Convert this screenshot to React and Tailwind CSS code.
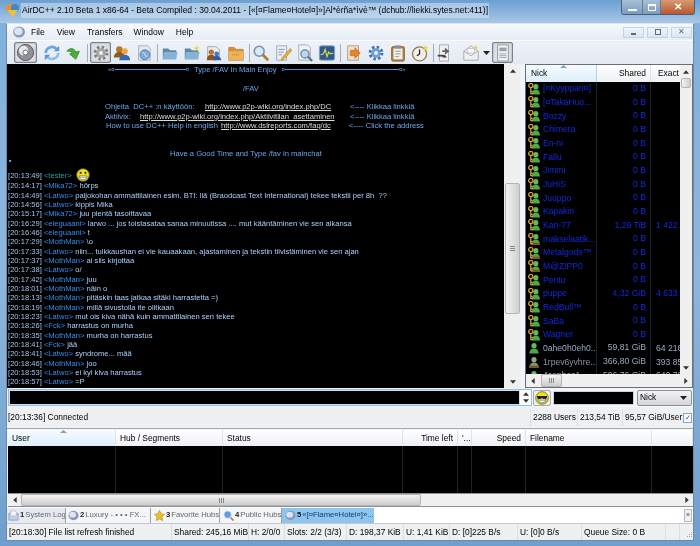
import React from "react";

const S = ({ children, size = 18, className = "" }) => (
  <svg width={size} height={size} viewBox="0 0 20 20" className={className}>{children}</svg>
);
const Disc = () => <S size={19}><circle cx="10" cy="10" r="8.5" fill="#8d9296" stroke="#55595c"/><circle cx="8" cy="8" r="5" fill="#e6e8ea"/><circle cx="10" cy="10" r="2.6" fill="#fff" stroke="#666"/></S>;
const Refresh = () => <S><path d="M3 10a7 7 0 0 1 12-4.5" fill="none" stroke="#6ba6de" strokeWidth="3"/><path d="M17 10a7 7 0 0 1-12 4.5" fill="none" stroke="#8cc0ea" strokeWidth="3"/><path d="M18 2v6h-6z" fill="#5a97d6"/><path d="M2 18v-6h6z" fill="#5a97d6"/></S>;
const GreenArrow = () => <S><path d="M2 8c3-4 8-4 10 1l4-1-4 9-7-6 3-1c-1-2-4-2-6-2z" fill="#4caf3a" stroke="#2c7d22" strokeWidth=".8"/></S>;
const Gear = ({ c = "#a4a4a4", d = "#7f7f7f" }) => <S><circle cx="10" cy="10" r="6.500" fill="none" stroke={d} strokeWidth="3.400" strokeDasharray="2.600 2.500"/><circle cx="10" cy="10" r="5.400" fill={c}/><circle cx="10" cy="10" r="2.200" fill="#eef0f2"/></S>;
const Users = () => <S><circle cx="7" cy="6" r="3.600" fill="#b5762a"/><path d="M1 15c0-4 3-6 6-6s6 2 6 6z" fill="#8a5a1f"/><circle cx="13" cy="8" r="3.400" fill="#f2a33a"/><path d="M7 18c0-4 3-6 6-6s6 2 6 6z" fill="#3566b4"/></S>;
const GlobeDoc = () => <S><path d="M4 2h10l3 3v13H4z" fill="#e6e8ec" stroke="#a8adb4"/><circle cx="11" cy="12" r="5.500" fill="#7fa9d8" stroke="#4f7fb4"/><path d="M8 10c2-1 3 0 3 2s2 2 3 1" fill="none" stroke="#dfeaf6"/></S>;
const Folder = ({ a = "#5f87a8", b = "#86b2d6", star }) => <S><path d="M2 5h6l2 2h7v10H2z" fill={a}/><path d="M3.500 9h15l-2 8H2z" fill={b}/>{star && <path d="M15 1l1 2.500 2.500.500-2 1.500.5 2.500-2-1.300-2 1.300.5-2.500-2-1.500 2.500-.5z" fill="#f5d64c"/>}</S>;
const FolderUsers = () => <S><path d="M3 3h9l4 3v11H3z" fill="#eceef1" stroke="#98a0a8"/><circle cx="7" cy="9" r="3" fill="#c0702a"/><path d="M2 18c0-4 2-6 5-6s5 2 5 6z" fill="#8a5420"/><circle cx="13" cy="11" r="2.600" fill="#3f78c8"/><path d="M9 18c0-3 2-5 4-5s5 2 5 5z" fill="#2d5ca8"/></S>;
const OrangeFolder = () => <S><path d="M2 4h6l2 2h8v12H2z" fill="#d9912f" stroke="#a86a1a" strokeWidth=".7"/><path d="M2 8h16v10H2z" fill="#efb257"/><path d="M6 12h8" stroke="#a86a1a" strokeDasharray="1 1"/></S>;
const Magnifier = () => <S><circle cx="8" cy="8" r="5.500" fill="#d9e8f6" stroke="#7a93ad" strokeWidth="1.800"/><path d="M12 12l6 6" stroke="#a97a3c" strokeWidth="3"/></S>;
const NotePencil = () => <S><path d="M3 2h11v16H3z" fill="#eef0f3" stroke="#9aa3ad"/><path d="M5 6h7M5 9h6M5 12h4" stroke="#6d8fb8"/><path d="M18 5L9 15l-1 3 3-1 9-10z" fill="#e7b33c" stroke="#9c7420" strokeWidth=".6"/></S>;
const DocMag = () => <S><path d="M3 1h10l3 3v14H3z" fill="#eef0f3" stroke="#a4acb5"/><circle cx="10" cy="11" r="4.500" fill="#bcd4ec" stroke="#6f88a4" strokeWidth="1.500"/><path d="M13 14l5 5" stroke="#5f6f80" strokeWidth="2.400"/></S>;
const Chart = () => <S><rect x="1.500" y="2" width="17" height="16" rx="2" fill="#2d5a8c" stroke="#8ea6bf"/><path d="M3 12l3-1 2-5 2 8 2-5 2 2 3-1" fill="none" stroke="#e6d54c" strokeWidth="1.300"/></S>;
const ArrowBox = () => <S><path d="M3 2h12v16H3z" fill="#f0e4c8" stroke="#a79a80"/><path d="M6 7h5V4l6 6-6 6v-3H6z" fill="#e8832a" stroke="#b05a14" strokeWidth=".6"/></S>;
const Clipboard = () => <S><rect x="3" y="3" width="14" height="16" rx="1.500" fill="#b98540" stroke="#7f5520"/><rect x="5" y="5" width="10" height="12" fill="#f2f2f0"/><rect x="7" y="1.500" width="6" height="3.500" fill="#8b9098"/><path d="M7 8h6M7 11h6M7 14h4" stroke="#8a8a8a"/></S>;
const Clock = () => <S><circle cx="9.500" cy="11" r="7.800" fill="#f4efe6" stroke="#8d7a5c" strokeWidth="1.400"/><path d="M9.500 6v5l-3 2" fill="none" stroke="#222" strokeWidth="1.400"/><path d="M16 1l1 2.400 2.400.5-2 1.500.5 2.500-2-1.300-1.800 1.300.4-2.500-1.800-1.500 2.400-.5z" fill="#f0d048"/></S>;
const DocArrow = () => <S><path d="M5 1h10v18H5z" fill="#f0f1f3" stroke="#a0a6ad"/><path d="M8 7h3V4l5 4-5 4V9H8z" fill="#666"/><path d="M3 12h7v2H3z" fill="#444"/><path d="M11 12l-3 3h5z" fill="#333"/></S>;
const Envelope = () => <S><path d="M2 8l8-6 8 6v10H2z" fill="#eef0f2" stroke="#a2a8ae"/><path d="M2 8l8 5 8-5" fill="none" stroke="#a2a8ae"/><rect x="6" y="5" width="8" height="5" fill="#fafafa" stroke="#c2c6ca"/><path d="M15 1l.800 2 2 .400-1.600 1.200.4 2-1.600-1-1.600 1 .4-2-1.600-1.200 2-.4z" fill="#f0d048"/></S>;
const DocPanel = () => <S><path d="M4 1h12v18H4z" fill="#f0f1f3" stroke="#8e949a"/><rect x="6" y="4" width="8" height="4" fill="#9ba1a8"/><path d="M6 11h8M6 13h8M6 15h8" stroke="#9ba1a8"/></S>;
const Bubble = () => <S size={14}><ellipse cx="10" cy="10" rx="8.500" ry="8" fill="#8a9ab5"/><ellipse cx="9" cy="9" rx="6" ry="5.500" fill="#dbe4f2"/></S>;

const Smiley = ({ glasses }) => (
  <svg width="14" height="14" viewBox="0 0 14 14">
    <circle cx="7" cy="7" r="6.300" fill="#efe21c" stroke="#6f6a10" strokeWidth=".8"/>
    {glasses ? <path d="M2 5h10v1.500l-1 1.500H8.200L7 6.500 5.800 8H3L2 6.500z" fill="#222"/> : <><circle cx="4.600" cy="4.800" r="1.100" fill="#333"/><circle cx="9.400" cy="4.800" r="1.100" fill="#333"/></>}
    <path d="M3 8h8c0 2.500-2 3.800-4 3.800S3 10.500 3 8z" fill="#fff" stroke="#444" strokeWidth=".6"/>
    <path d="M3.500 9.500h7" stroke="#777" strokeWidth=".5"/>
  </svg>
);

const UserIcon = ({ op, base }) => (
  <svg width="12" height="12" viewBox="0 0 13 13" className="shrink-0">
    <circle cx={op ? 8.500 : 6.500} cy="4" r="2.800" fill={base === "grey" ? "#8fa88c" : "#62b85e"}/>
    <path d={op ? "M4 12.500c0-3.500 2-5.500 4.500-5.500s4.500 2 4.500 5.500z" : "M1.500 12.500c0-3.500 2-5.500 5-5.500s5 2 5 5.500z"} fill={base === "grey" ? "#7d957a" : "#4da84a"}/>
    {base && <rect x={op ? 3 : 1} y="10.500" width={op ? 10 : 11} height="2.500" fill="#7a5526"/>}
    {op && <><circle cx="3" cy="2.800" r="2.300" fill="none" stroke="#d9a520" strokeWidth="1.400"/><path d="M3 5v7M3 9h2M3 11.500h2" stroke="#d9a520" strokeWidth="1.300"/></>}
  </svg>
);

const Arrow = ({ dir }) => {
  const d = { up: "M0 4L3.500 0 7 4z", down: "M0 0L3.500 4 7 0z", left: "M4 0L0 3.500 4 7z", right: "M0 0L4 3.500 0 7z" }[dir];
  return <svg width="6" height="6" viewBox="0 0 7 7" className="shrink-0"><path d={d} fill="#333" transform={dir === "up" || dir === "down" ? "translate(0 1.500)" : "translate(1.500 0)"}/></svg>;
};

const TBtn = ({ children, pressed, w = "w-[22px]", className = "" }) => (
  <div className={`${w} ${className} h-[21px] flex items-center justify-center shrink-0 ${pressed ? "border border-[#7d8287] rounded-[2px] bg-[#dde1e6] shadow-[inset_0_0_2px_#8a8f94]" : ""}`}>{children}</div>
);
const Sep = () => <div className="w-px h-[18px] bg-[#a9adb2] mx-[2px] shrink-0" />;

const Ctrl = ({ children, w = "w-[21px]" }) => (
  <div className={`${w} h-[11px] flex items-center justify-center bg-gradient-to-b from-[#eef5fc] to-[#d8e6f4] border border-[#c2d3e4] text-[#5a6a7a] text-[8px] leading-none`}>{children}</div>
);

const chat = [
  ["20:13:49", "tester", "", true],
  ["20:14:17", "Mika72", "hörps"],
  ["20:14:49", "Latwo", "paljokohan ammattilainen esim. BTI: llä (Braodcast Text International) tekee tekstii per 8h  ??"],
  ["20:14:56", "Latwo", "kippis Mika"],
  ["20:15:17", "Mika72", "juu pientä tasoittavaa"],
  ["20:16:29", "eleguaani", "larwo ... jos toistasataa sanaa minuutissa .... mut kääntäminen vie sen aikansa"],
  ["20:16:46", "eleguaani", "t"],
  ["20:17:29", "MothMan", "\\o"],
  ["20:17:33", "Latwo", "niin... tulkkaushan ei vie kauaakaan, ajastaminen ja tekstin tiivistäminen vie sen ajan"],
  ["20:17:37", "MothMan", "ai siis kirjottaa"],
  ["20:17:38", "Latwo", "o/"],
  ["20:17:42", "MothMan", "juu"],
  ["20:18:01", "MothMan", "näin o"],
  ["20:18:13", "MothMan", "pitäskin taas jatkaa sitäki harrastetta =)"],
  ["20:18:19", "MothMan", "millä sivustolla ite olitkaan"],
  ["20:18:23", "Latwo", "mut ois kiva nähä kuin ammattilainen sen tekee"],
  ["20:18:26", "Fck", "harrastus on murha"],
  ["20:18:35", "MothMan", "murha on harrastus"],
  ["20:18:41", "Fck", "jää"],
  ["20:18:41", "Latwo", "syndrome... mää"],
  ["20:18:46", "MothMan", "joo"],
  ["20:18:53", "Latwo", "ei kyl kiva harrastus"],
  ["20:18:57", "Latwo", "=P"],
];

const users = [
  ["[¤Kyyppari¤]", "0 B", "", 1], ["[¤TakaHuo...", "0 B", "", 1], ["Bozzy", "0 B", "", 1], ["Chimera", "0 B", "", 1],
  ["En-ni", "0 B", "", 1], ["Fallu", "0 B", "", 1], ["Jimmi", "0 B", "", 1], ["JuHiS", "0 B", "", 1],
  ["Juoppo", "0 B", "", 1], ["Kapakin", "0 B", "", 1], ["Kari-77", "1,29 TiB", "1 422 8", 1],
  ["makselaatik...", "0 B", "", 1, 1], ["Metalgods™", "0 B", "", 1, 1], ["M@Z!PP0", "0 B", "", 1, 1],
  ["Pentu", "0 B", "", 1], ["puppe", "4,32 GiB", "4 633 4", 1], ["RedBull™", "0 B", "", 1], ["SaBa", "0 B", "", 1], ["Wagner", "0 B", "", 1],
  ["0ahe0h0eh0...", "59,81 GiB", "64 216", 0], ["1rpev6yvhre...", "366,80 GiB", "393 85", 0, 2], ["4cephas1", "596,76 GiB", "640 76", 0],
];

const cols = [
  ["User", "w-[108px]"], ["Hub / Segments", "w-[107px]"], ["Status", "w-[180px]"], ["Time left", "w-[55px]", true],
  ["'...", "w-[14px]"], ["Speed", "w-[54px]", true], ["Filename", "w-[126px]"], ["", "flex-1"],
];
const tabs = [
  ["1", "System Log", "w-[59px] pl-[1px] bg-[#e6eaf0]"], ["2", "Luxury - • • • FX...", "w-[85px] pl-[2px] bg-[#f4f5f7]"], ["3", "Favorite Hubs", "w-[69px] pl-[3px] bg-[#f4f5f7]"], ["4", "Public Hubs", "w-[62px] pl-[3px] bg-[#f4f5f7]"],
];
const statusCells = [
  ["[20:18:30] File list refresh finished", "w-[165px]"], ["Shared: 245,16 MiB", "w-[77px]"], ["H: 2/0/0", "w-[36px]"], ["Slots: 2/2 (3/3)", "w-[62px]"],
  ["D: 198,37 KiB", "w-[57px]"], ["U: 1,41 KiB", "w-[46px]"], ["D: [0]225 B/s", "w-[68px]"], ["U: [0]0 B/s", "w-[64px]"], ["Queue Size: 0 B", "w-[84px]"], ["", "w-[14px]"],
];

const VScroll = ({ thumbTop, thumbH, w = "w-[17px]", grip }) => (
  <div className={`${w} shrink-0 bg-[#f0f0f0] flex flex-col items-center`}>
    <div className="h-[13px] flex items-center justify-center shrink-0"><Arrow dir="up" /></div>
    <div className="flex-1 w-full flex flex-col">
      <div className={`${thumbTop} shrink-0`} />
      <div className={`${thumbH} mx-px bg-gradient-to-r from-[#f2f2f2] to-[#cfcfcf] border border-[#b5b5b5] rounded-[2px] flex items-center justify-center shrink-0`}>
        {grip && <div className="w-[5px] h-[5px] border-y border-[#888] [background:linear-gradient(#888,#888)_center/100%_1px_no-repeat]" />}
      </div>
    </div>
    <div className="h-[13px] flex items-center justify-center shrink-0"><Arrow dir="down" /></div>
  </div>
);

const HScroll = ({ from, thumb, h = "h-[13px]" }) => (
  <div className={`${h} shrink-0 bg-[#f0f0f0] flex items-center`}>
    <div className="w-[13px] flex justify-center shrink-0"><Arrow dir="left" /></div>
    <div className={`${from} shrink-0`} />
    <div className={`${thumb} h-full bg-gradient-to-b from-[#f4f4f4] to-[#cdcdcd] border border-[#b5b5b5] rounded-[2px] flex items-center justify-center`}>
      <div className="w-[5px] h-[5px] border-x border-[#888] [background:linear-gradient(#888,#888)_center/1px_100%_no-repeat]" />
    </div>
    <div className="flex-1" />
    <div className="w-[13px] flex justify-center shrink-0"><Arrow dir="right" /></div>
  </div>
);

const Ln = ({ children }) => <div className="h-[9.33px] leading-[9.33px] flex whitespace-pre">{children}</div>;
const Link = ({ children, w }) => <span className={`${w} text-[#dcdcdc] underline underline-offset-1 shrink-0`}>{children}</span>;

export default function App() {
  return (
    <div className="w-[700px] h-[546px] overflow-hidden flex flex-col bg-gradient-to-b from-[#7fb0dc] via-[#8db7dc] to-[#6f9fce] font-['Liberation_Sans',sans-serif] text-black blur-[0.2px]">
      {/* title bar */}
      <div className="h-[23px] shrink-0 flex items-start pl-[5px] bg-gradient-to-b from-[#6c9fd2] to-[#a9c7e6] relative">
        <svg width="15" height="15" viewBox="0 0 15 15" className="mt-[3px] shrink-0"><circle cx="5" cy="5" r="4" fill="#e8912a"/><circle cx="10" cy="5" r="4" fill="#3f86cf"/><path d="M2 7l5.500 7L13 7z" fill="#e8c23a"/></svg>
        <div className="ml-[1px] mt-[3px] px-[1px] h-[15px] leading-[15px] text-[8.500px] whitespace-nowrap bg-[#dce9f5]/50 text-black">AirDC++ 2.10 Beta 1 x86-64 - Beta Compiled : 30.04.2011 - [«[¤Flame¤Hotel¤]»]Al*èrña*ìvè™ (dchub://liekki.sytes.net:411)]</div>
        <div className="ml-auto mr-[5px] flex h-[15px] border border-[#4a5f78] border-t-0 rounded-b-[3px] overflow-hidden shrink-0">
          <div className="w-[20px] bg-gradient-to-b from-[#a8c0d8] to-[#7a9cbc] flex items-end justify-center pb-[3px]"><div className="w-[9px] h-[2px] bg-white" /></div>
          <div className="w-[19px] bg-gradient-to-b from-[#a8c0d8] to-[#7a9cbc] border-x border-[#5f7c98] flex items-center justify-center"><div className="w-[8px] h-[7px] border border-white border-t-2" /></div>
          <div className="w-[33px] bg-gradient-to-b from-[#d69a72] to-[#b8582e] flex items-center justify-center text-white font-bold text-[10px] leading-none">✕</div>
        </div>
      </div>

      {/* client */}
      <div className="mx-[6px] h-[518px] shrink-0 flex flex-col bg-[#f1f4f9] border border-[#6f8aa8] border-t-[#dbe6f1]">
        {/* menu */}
        <div className="h-[16px] shrink-0 flex items-center bg-gradient-to-b from-[#f7f9fc] to-[#e6ecf5] text-[8.500px] relative">
          <div className="ml-[3px] w-[18px] flex justify-center"><Bubble /></div>
          <span className="ml-[3px]">File</span>
          <span className="ml-[12px]">View</span>
          <span className="ml-[12px]">Transfers</span>
          <span className="ml-[11px]">Window</span>
          <span className="ml-[12px]">Help</span>
          <div className="ml-auto mr-px flex gap-[3px]">
            <Ctrl><div className="w-[5px] h-[2px] bg-[#5a6a7a] mt-[4px]" /></Ctrl>
            <Ctrl><div className="w-[6px] h-[6px] border border-[#5a6a7a]" /></Ctrl>
            <Ctrl>✕</Ctrl>
          </div>
        </div>
        {/* toolbar */}
        <div className="h-[24px] shrink-0 flex items-center pl-[7px] bg-gradient-to-b from-[#eef2f8] to-[#e4eaf2] border-t border-[#f9fbfd]">
          <TBtn pressed w="w-[23px]"><Disc /></TBtn>
          <div className="w-[4px]" />
          <TBtn><Refresh /></TBtn><TBtn><GreenArrow /></TBtn>
          <Sep />
          <TBtn pressed w="w-[21px]"><Gear /></TBtn>
          <TBtn><Users /></TBtn><TBtn><GlobeDoc /></TBtn>
          <Sep />
          <TBtn className="-ml-px"><Folder /></TBtn><TBtn><Folder star /></TBtn><TBtn><FolderUsers /></TBtn><TBtn><OrangeFolder /></TBtn>
          <Sep />
          <TBtn className="-ml-[2px]"><Magnifier /></TBtn><TBtn><NotePencil /></TBtn><TBtn><DocMag /></TBtn><TBtn><Chart /></TBtn>
          <Sep />
          <TBtn><ArrowBox /></TBtn><TBtn><Gear c="#6f9fd8" d="#3f6fa8" /></TBtn><TBtn><Clipboard /></TBtn><TBtn><Clock /></TBtn>
          <Sep />
          <TBtn className="-ml-[3px]"><DocArrow /></TBtn>
          <div className="w-[5px]" />
          <TBtn><Envelope /></TBtn>
          <svg width="7" height="4" viewBox="0 0 7 4" className="ml-[1px]"><path d="M0 0h7L3.500 4z" fill="#222"/></svg>
          <div className="w-[2px]" />
          <TBtn pressed w="w-[21px]"><DocPanel /></TBtn>
        </div>

        {/* hub area */}
        <div className="h-[324px] shrink-0 flex">
          <div className="w-[497px] shrink-0 bg-black text-[7.600px] overflow-hidden pt-[1px] pl-px text-[#6ea6ec]">
            <Ln><span className="ml-[100px] w-[81px] text-[#6ea6ec] flex items-center text-[6px]">«¤<span className="flex-1 border-t border-[#5a90d8]" />¤</span><span className="ml-[5px]">Type /FAV In Main Enjoy</span><span className="ml-[5px] w-[124px] text-[#6ea6ec] flex items-center text-[6px]">¤<span className="flex-1 border-t border-[#5a90d8]" />¤»</span></Ln>
            <Ln> </Ln>
            <Ln><span className="ml-[235px]">/FAV</span></Ln>
            <Ln> </Ln>
            <Ln><span className="ml-[97px] w-[100px]">Ohjeita  DC++ :n käyttöön:</span><Link w="w-[145px]">http://www.p2p-wiki.org/index.php/DC</Link><span>{"<---- Klikkaa linkkiä"}</span></Ln>
            <Ln><span className="ml-[97px] w-[35px]">Aktiivix:</span><Link w="w-[210px]">http://www.p2p-wiki.org/index.php/Aktiivitilan_asettaminen</Link><span>{"<---- Klikkaa linkkiä"}</span></Ln>
            <Ln><span className="ml-[98px] w-[115px]">How to use DC++ Help in english</span><Link w="w-[128px]">http://www.dslreports.com/faq/dc</Link><span>{"<---- Click the address"}</span></Ln>
            <Ln> </Ln>
            <Ln> </Ln>
            <Ln><span className="ml-[162px]">Have a Good Time and Type /fav in mainchat</span></Ln>
            <div className="h-[7px] pl-[1px] leading-[5px] text-[#8ab4e8]">▪</div>
            <div className="mt-[4px]">
              {chat.map(([t, n, m, smile], i) => (
                <div key={i} className={`flex whitespace-pre leading-[9.33px] ${smile ? "h-[12px] items-center" : "h-[9.33px]"}`}>
                  <span className="text-[#a4c2e8]">[{t}] </span>
                  <span className={smile ? "text-[#22a0a0]" : "text-[#3a8cec]"}>{"<"}{n}{">"} </span>
                  <span className="text-[#acd0fa]">{m}</span>
                  {smile && <span className="ml-[2px]"><Smiley /></span>}
                </div>
              ))}
            </div>
          </div>
          <VScroll thumbTop="h-[106px]" thumbH="h-[131px]" grip />
          <div className="w-[4px] shrink-0" />
          <div className="flex-1 min-w-0 border border-[#6a6f75] flex flex-col">
            <div className="flex flex-1 min-h-0">
              <div className="flex-1 min-w-0 flex flex-col">
                <div className="h-[17px] shrink-0 flex bg-gradient-to-b from-white to-[#eef0f3] text-[8.400px]">
                  <div className="w-[71px] shrink-0 pl-[5px] flex items-center border-r border-[#a5d7f3] bg-gradient-to-b from-[#f6fbfe] to-[#dceffb] relative">
                    Nick
                    <svg className="absolute left-[34px] top-0" width="7" height="3" viewBox="0 0 7 3"><path d="M0 3L3.500 0 7 3z" fill="#7da3c4"/></svg>
                  </div>
                  <div className="w-[54px] shrink-0 pr-[4px] flex items-center justify-end border-r border-[#dfe2e6]">Shared</div>
                  <div className="flex-1 overflow-hidden whitespace-nowrap pl-[7px] flex items-center">Exact S</div>
                </div>
                <div className="flex-1 min-h-0 bg-black overflow-hidden text-[8.600px]">
                  {users.map(([n, s, e, op, b], i) => (
                    <div key={i} className={`h-[13.67px] flex items-center ${op ? "text-[#1428dc]" : "text-[#9aaac4]"}`}>
                      <div className="w-[71px] shrink-0 flex items-center gap-[3px] pl-[2px] border-r border-[#1a2430] h-full overflow-hidden whitespace-nowrap">
                        <UserIcon op={op} base={b === 1 ? "brown" : b === 2 ? "grey" : undefined} />
                        <span className={i === 20 ? "text-[#8a94a2]" : ""}>{n}</span>
                      </div>
                      <div className="w-[54px] shrink-0 pr-[4px] text-right border-r border-[#1a2430] h-full leading-[13.67px]">{s}</div>
                      <div className="flex-1 overflow-hidden whitespace-nowrap pl-[5px]">{e}</div>
                    </div>
                  ))}
                </div>
              </div>
              <VScroll w="w-[12px]" thumbTop="h-0" thumbH="h-[10px]" />
            </div>
            <HScroll from="w-[2px]" thumb="w-[21px]" />
          </div>
        </div>

        {/* input row */}
        <div className="h-[19px] shrink-0 flex items-center pl-px pr-px">
          <div className="w-[524px] h-[17px] border border-[#8fc0e8] flex items-center bg-white shrink-0">
            <div className="flex-1 h-full bg-black border border-[#d9dde2]" />
            <div className="w-[11px] flex flex-col items-center justify-center gap-[1px]"><Arrow dir="up" /><Arrow dir="down" /></div>
          </div>
          <div className="w-[18px] h-[16px] border border-[#a8acb2] rounded-[2px] flex items-center justify-center ml-[1px] bg-[#eceef1] shrink-0"><Smiley glasses /></div>
          <div className="w-[81px] h-[14px] bg-black border border-[#d0d4d8] ml-[2px] shrink-0" />
          <div className="flex-1 h-[16px] ml-[3px] border border-[#8d9196] rounded-[2px] bg-gradient-to-b from-[#f4f4f4] to-[#d6d6d6] flex items-center pl-[2px] pr-[4px] text-[8.400px]">
            Nick
            <svg width="7" height="4" viewBox="0 0 7 4" className="ml-auto"><path d="M0 0h7L3.500 4z" fill="#222"/></svg>
          </div>
        </div>

        {/* connected row */}
        <div className="h-[22px] shrink-0 flex items-center bg-[#eff0f2] text-[8.400px] border-b border-[#a4a8ad] whitespace-nowrap">
          <div className="flex-1 pl-px">[20:13:36] Connected</div>
          <div className="w-[47px] pl-[2px] border-l border-[#dcdee1] leading-[17px]">2288 Users</div>
          <div className="w-[45px] pl-[2px] border-l border-[#dcdee1] leading-[17px]">213,54 TiB</div>
          <div className="w-[61px] pl-[2px] border-l border-[#dcdee1] leading-[17px]">95,57 GiB/User</div>
          <div className="w-[9px] h-[10px] border border-[#8ea5bb] bg-[#f6f9fc] text-[#2e5a9c] text-[7px] leading-[8px] text-center mr-px">✓</div>
        </div>

        {/* transfers */}
        <div className="h-[16px] mt-[1px] shrink-0 flex bg-gradient-to-b from-white to-[#eef0f3] text-[8.400px] ml-px">
          {cols.map(([c, w, r], i) => (
            <div key={i} className={`${w} h-full flex items-center border-r border-[#dfe2e6] whitespace-nowrap ${r ? "justify-end pr-[4px]" : "pl-[4px]"} ${i === 0 ? "bg-gradient-to-b from-[#f6fbfe] to-[#dceffb] border-[#a5d7f3] relative" : ""}`}>
              {c}
              {i === 0 && <svg className="absolute left-[52px] top-0" width="7" height="3" viewBox="0 0 7 3"><path d="M0 3L3.500 0 7 3z" fill="#7da3c4"/></svg>}
            </div>
          ))}
        </div>
        <div className="flex-1 min-h-0 flex bg-black ml-px">
          {cols.map(([c, w], i) => <div key={i} className={`${w} h-full border-r border-[#1a2430] last:border-0`} />)}
        </div>
        <div className="ml-px border-y border-[#8b9096]"><HScroll from="w-[0px]" thumb="w-[400px]" h="h-[12px]" /></div>

        {/* tabs */}
        <div className="h-[16px] shrink-0 flex items-center bg-white text-[7.700px]">
          {tabs.map(([k, t, w], i) => (
            <div key={i} className={`${w} h-[15px] flex items-center gap-[1px] whitespace-nowrap overflow-hidden shrink-0 border-r border-[#9da2a8] text-[#5f6772]`}>
              {i === 0 && <svg width="11" height="11" viewBox="0 0 13 13" className="shrink-0"><path d="M1 4h11v8H1z" fill="#c0d0e6" stroke="#8ea0bc"/><path d="M3 1h5l2 2v4H3z" fill="#f2f4f8" stroke="#a0a8b4" strokeWidth=".6"/></svg>}
              {i === 1 && <svg width="11" height="11" viewBox="0 0 13 13" className="shrink-0"><ellipse cx="6.500" cy="6.500" rx="6" ry="5.500" fill="#8a9ab5"/><ellipse cx="5.500" cy="5.500" rx="4" ry="3.500" fill="#dbe4f2"/></svg>}
              {i === 2 && <svg width="11" height="11" viewBox="0 0 13 13" className="shrink-0"><path d="M6.500 .5l2 4 4 .6-3 3 .8 4.400-3.800-2-3.800 2 .8-4.400-3-3 4-.6z" fill="#f0c020" stroke="#a07c10" strokeWidth=".6"/></svg>}
              {i === 3 && <svg width="11" height="11" viewBox="0 0 13 13" className="shrink-0"><circle cx="5.500" cy="5.500" r="4.500" fill="#5f9ee0" stroke="#f0f4f8"/><path d="M9 9l3.500 3.500" stroke="#c08030" strokeWidth="2"/></svg>}
              <span className="font-bold text-[#222]">{k}</span><span>{t}</span>
            </div>
          ))}
          <div className="w-[92px] h-[15px] flex items-center gap-[1px] pl-[3px] bg-[#8cc6ee] whitespace-nowrap overflow-hidden shrink-0 text-[#1a3c60]">
            <svg width="11" height="11" viewBox="0 0 13 13" className="shrink-0"><ellipse cx="6.500" cy="6.500" rx="6" ry="5.500" fill="#8a9ab5"/><ellipse cx="5.500" cy="5.500" rx="4" ry="3.500" fill="#dbe4f2"/></svg>
            <span className="font-bold text-[#111]">5</span><span>«[¤Flame¤Hotel¤]»...</span>
          </div>
          <div className="flex-1" />
          <div className="w-[8px] h-[13px] mr-px border border-[#b5b9be] bg-[#eef0f3] text-[7px] leading-[10px] text-center text-[#444]">»</div>
        </div>

        {/* status bar */}
        <div className="h-[17px] shrink-0 flex items-center bg-[#eff0f2] text-[8.400px] border-t border-[#c4c8cd] relative">
          {statusCells.map(([t, w], i) => (
            <div key={i} className={`${w} shrink-0 h-full flex items-center whitespace-nowrap overflow-hidden pl-[2px] border-r border-[#dcdee1]`}>{t}</div>
          ))}
          <svg width="10" height="10" viewBox="0 0 10 10" className="ml-auto self-end"><path d="M8 2h1v1H8zM6 4h1v1H6zM8 4h1v1H8zM4 6h1v1H4zM6 6h1v1H6zM8 6h1v1H8z" fill="#a0a4a8"/></svg>
        </div>
      </div>
    </div>
  );
}
